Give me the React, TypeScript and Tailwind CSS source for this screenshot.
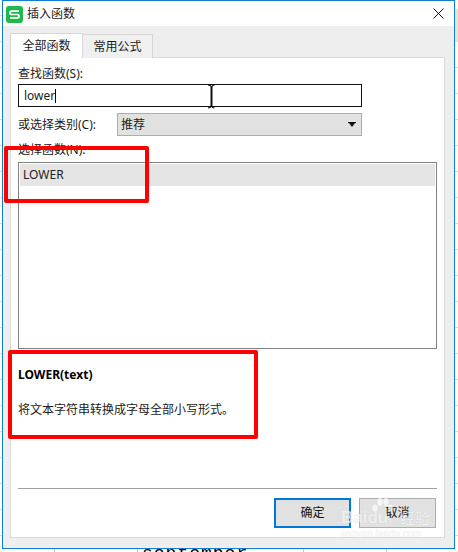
import React from "react";

const Label = ({ children, className = "" }: { children: React.ReactNode; className?: string }) => (
  <div className={`text-[12px] leading-[16px] text-[#1a1a1a] ${className}`}>{children}</div>
);

export default function App() {
  return (
    <div className="relative w-[458px] h-[552px] overflow-hidden bg-white font-['Noto_Sans','Noto_Sans_CJK_SC',sans-serif]">
      {/* spreadsheet behind the dialog */}
      <div className="absolute inset-0 bg-[repeating-linear-gradient(to_bottom,transparent_0,transparent_15px,#dcdcdc_15px,#dcdcdc_16px,transparent_16px,transparent_26px)]" />
      <div className="absolute right-0 top-[9px] w-[4px] h-[33px] bg-[#e4e4e4]" />
      <div className="absolute left-[54px] top-[548px] w-px h-[4px] bg-[#c8c8c8]" />
      <div className="absolute left-[137px] top-[548px] w-px h-[4px] bg-[#c8c8c8]" />
      <div className="absolute left-[303px] top-[548px] w-px h-[4px] bg-[#c8c8c8]" />
      <div className="absolute left-[386px] top-[548px] w-px h-[4px] bg-[#c8c8c8]" />
      <div className="absolute left-[142px] top-[544px] text-[18px] leading-[20px] tracking-[1px] text-black font-['Liberation_Mono',monospace]">
        september
      </div>

      {/* dialog window */}
      <div className="absolute left-[2px] top-0 w-[453px] h-[549px] border border-[#0f7fd6] bg-[#eeeeee] flex flex-col">
        <div className="h-[25px] bg-white flex items-center pl-[3px] shrink-0">
          <svg width="17" height="17" viewBox="0 0 17 17" className="mt-px">
            <rect width="17" height="17" rx="3" fill="#1fb84d" />
            <path d="M13 5.2H5.6a1.6 1.6 0 0 0 0 3.3h5.8a1.6 1.6 0 0 1 0 3.3H4" fill="none" stroke="#fff" strokeWidth="1.7" />
          </svg>
          <span className="ml-[4px] text-[12px] leading-[16px] text-[#222]">插入函数</span>
          <svg width="11" height="11" viewBox="0 0 11 11" className="ml-auto mr-[10px]">
            <path d="M0.500 0.500l10 10M10.500 0.500l-10 10" stroke="#111" strokeWidth="1" fill="none" />
          </svg>
        </div>

        <div className="flex-1 flex flex-col pl-[7px] pr-[9px] pt-[7px] pb-[10px]">
          <div className="flex items-end h-[25px] shrink-0 relative z-10">
            <div className="w-[73px] h-[25px] bg-white border border-b-0 border-[#d6d6d6] flex items-center justify-center text-[12px] text-[#1a1a1a]">
              全部函数
            </div>
            <div className="w-[70px] h-[24px] bg-[#f0f0f0] border border-l-0 border-b-0 border-[#d6d6d6] flex items-center justify-center text-[12px] text-[#1a1a1a]">
              常用公式
            </div>
          </div>
          <div className="flex-1 -mt-px bg-white border border-[#d9d9d9] pl-[7px] pr-[7px] pt-[8px] flex flex-col">
            <Label>查找函数(S):</Label>
            <div className="mt-[2px] w-[344px] h-[23px] border border-[#111] flex items-center pl-[5px] text-[12px] text-[#222]">
              lower
              <span className="w-px h-[14px] bg-black" />
            </div>
            <div className="mt-[6px] flex items-center h-[23px]">
              <Label className="w-[99px]">或选择类别(C):</Label>
              <div className="w-[245px] h-[23px] bg-[#e1e1e1] border border-[#adadad] flex items-center justify-between pl-[3px] pr-[5px] text-[12px] text-[#222]">
                推荐
                <svg width="8" height="5" viewBox="0 0 8 5">
                  <path d="M0 0h8v1H7L4 5 1 1H0z" fill="#111" />
                </svg>
              </div>
            </div>
            <Label className="mt-[6px]">选择函数(N):</Label>
            <div className="mt-[4px] w-[419px] h-[187px] border border-[#828282] p-px">
              <div className="h-[22px] bg-[#e5e5e5] flex items-center pl-[3px] text-[12px] text-[#222]">LOWER</div>
            </div>
            <div className="mt-[18px] text-[12px] leading-[16px] font-bold text-black">LOWER(text)</div>
            <div className="mt-[19px] text-[12px] leading-[16px] text-[#1a1a1a]">将文本字符串转换成字母全部小写形式。</div>
            <div className="mt-[70px] w-[419px] h-px bg-[#a0a0a0]" />
            <div className="mt-[9px] w-[418px] flex justify-end gap-[8px]">
              <div className="w-[77px] h-[30px] bg-[#e1e1e1] border-2 border-[#0078d7] flex items-center justify-center text-[12px] text-[#111]">
                确定
              </div>
              <div className="w-[77px] h-[30px] bg-[#e1e1e1] border border-[#adadad] flex items-center justify-center text-[12px] text-[#111]">
                取消
              </div>
            </div>
          </div>
        </div>
      </div>

      {/* I-beam mouse cursor */}
      <svg width="9" height="26" viewBox="0 0 9 26" className="absolute left-[207px] top-[84px]">
        <path d="M1 1c2 0 3 1 3.500 2c.5-1 1.500-2 3-2M1 24c2 0 3-1 3.500-2c.5 1 1.500 2 3 2" fill="none" stroke="#111" strokeWidth="1.200" />
        <path d="M4.500 3v19" fill="none" stroke="#111" strokeWidth="2" />
      </svg>

      {/* red annotation boxes */}
      <div className="absolute left-[4px] top-[146px] w-[145px] h-[57px] border-[4px] border-[#fe0000] rounded-[2px]" />
      <div className="absolute left-[8px] top-[350px] w-[250px] h-[89px] border-[4px] border-[#fe0000] rounded-[2px]" />

      {/* watermark */}
      <div className="absolute left-[341px] top-[497px] w-[100px] h-[46px] text-white/70 [text-shadow:0_0_1px_rgba(0,0,0,0.12)]">
        <svg width="22" height="16" viewBox="0 0 22 16" className="absolute left-[30px] top-0">
          <g fill="#fff" fillOpacity="0.7">
            <ellipse cx="4" cy="11" rx="2.500" ry="3.500" />
            <ellipse cx="9" cy="5" rx="2.500" ry="4" />
            <ellipse cx="15" cy="5" rx="2.500" ry="4" />
            <ellipse cx="19.500" cy="11" rx="2.300" ry="3.500" />
          </g>
        </svg>
        <div className="flex items-center font-['Liberation_Sans',sans-serif] font-bold text-[17px] leading-[20px] pt-[11px]">
          Baidu
          <span className="ml-[12px] text-[15px] font-['Noto_Sans_CJK_SC',sans-serif] font-normal">经验</span>
        </div>
        <div className="text-[10px] leading-[12px] mt-[0px] font-['Liberation_Sans',sans-serif]">jingyan.baidu.com</div>
      </div>
    </div>
  );
}
